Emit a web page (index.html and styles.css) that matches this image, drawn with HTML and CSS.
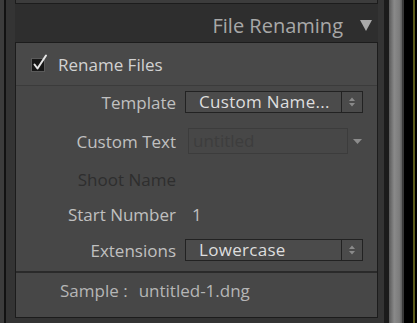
FILE: index.html
```html
<!DOCTYPE html>
<html lang="en">
<head>
  <meta charset="UTF-8" />
  <title>File Renaming</title>
  <link rel="stylesheet" href="styles.css">
</head>
<body>
  <div class="frame">
    <div class="edge-left"></div>
    <div class="edge-line"></div>

    <div class="side">
      <div class="prev-panel"></div>

      <div class="panel-head">
        <span class="head-title">File Renaming</span>
        <svg class="head-arrow" width="12" height="11" viewBox="0 0 12 11">
          <path d="M0 0 H12 L6 11 Z" fill="#a9a9a9"/>
        </svg>
      </div>

      <div class="panel">
        <div class="rename-row">
          <svg class="check" width="22" height="20" viewBox="0 0 22 20">
            <rect x="1.5" y="5.5" width="13" height="13" fill="#171717" stroke="#5a5a5a"/>
            <path d="M4.5 11.5 L7.5 15.5 L16 2.5" fill="none" stroke="#e6e6e6" stroke-width="2" stroke-linecap="round" stroke-linejoin="round"/>
          </svg>
          <span class="rename-label">Rename Files</span>
        </div>

        <div class="fields">
          <div class="field">
            <span class="label">Template</span>
            <div class="select">
              <span class="select-value">Custom Name...</span>
              <span class="stepper">
                <svg width="8" height="12" viewBox="0 0 8 12">
                  <path d="M1 5 L4 1.5 L7 5 Z M1 7 L4 10.5 L7 7 Z" fill="#8a8a8a"/>
                </svg>
              </span>
            </div>
          </div>

          <div class="field field-text">
            <span class="label">Custom Text</span>
            <div class="text-input">untitled</div>
            <svg class="drop" width="9" height="5" viewBox="0 0 9 5">
              <path d="M0 0 H9 L4.5 5 Z" fill="#8c8c8c"/>
            </svg>
          </div>

          <div class="field">
            <span class="label disabled">Shoot Name</span>
          </div>

          <div class="field">
            <span class="label">Start Number</span>
            <span class="value">1</span>
          </div>

          <div class="field field-last">
            <span class="label">Extensions</span>
            <div class="select">
              <span class="select-value">Lowercase</span>
              <span class="stepper">
                <svg width="8" height="12" viewBox="0 0 8 12">
                  <path d="M1 5 L4 1.5 L7 5 Z M1 7 L4 10.5 L7 7 Z" fill="#8a8a8a"/>
                </svg>
              </span>
            </div>
          </div>
        </div>

        <div class="sample-row">
          <span>Sample :</span>
          <span>untitled-1.dng</span>
        </div>
      </div>
    </div>

    <div class="gutter"></div>
    <div class="scrollbar"></div>
    <div class="scroll-edge"></div>
    <div class="blackout"></div>
    <div class="olive"></div>
    <div class="blackout-end"></div>
  </div>
</body>
</html>
```

FILE: styles.css
```css
body {
  margin: 0;
  background: #000;
  font-family: 'Open Sans', sans-serif;
}

.frame {
  display: flex;
  width: 417px;
  height: 323px;
  overflow: hidden;
}

.edge-left {
  width: 4px;
  background: #3c3c3c;
}

.edge-line {
  width: 2px;
  background: #121212;
}

.side {
  width: 378px;
  box-sizing: border-box;
  padding: 0 6px 0 9px;
  background: #343434;
  display: flex;
  flex-direction: column;
}

.prev-panel {
  height: 3px;
  background: #3c3c3c;
  border: 1px solid #1c1c1c;
  border-top: none;
}

.panel-head {
  height: 38px;
  box-sizing: border-box;
  padding: 4px 6px 0 0;
  display: flex;
  align-items: center;
  justify-content: flex-end;
  background: #2e2e2e;
}

.head-title {
  color: #a8a8a8;
  font-size: 20px;
  margin-right: 17px;
}

.head-arrow {
  margin-top: 1px;
}

.panel {
  flex: 1;
  margin-bottom: 5px;
  background: #474747;
  border: 1px solid #1c1c1c;
  display: flex;
  flex-direction: column;
}

.rename-row {
  height: 42px;
  display: flex;
  align-items: center;
  padding-left: 14px;
  border-bottom: 1px solid #3b3b3b;
  background: #494949;
}

.check {
  margin-top: -2px;
}

.rename-label {
  color: #d2d2d2;
  font-size: 17px;
  margin-left: 6px;
}

.fields {
  display: flex;
  flex-direction: column;
  gap: 5px;
  padding: 1px 0 6px;
}

.field {
  height: 30px;
  display: flex;
  align-items: center;
  font-size: 17px;
}

.field-text {
  margin: 4px 0 3px;
}

.field-last {
  margin-top: 1px;
}

.label {
  width: 160px;
  text-align: right;
  color: #c0c0c0;
  margin-right: 9px;
}

.label.disabled {
  color: #2e2e2e;
}

.value {
  color: #c0c0c0;
  margin-left: 7px;
}

.select {
  width: 178px;
  height: 22px;
  box-sizing: border-box;
  border: 1px solid #222;
  background: #4b4b4b;
  display: flex;
}

.select-value {
  flex: 1;
  color: #dedede;
  padding-left: 13px;
  line-height: 20px;
  letter-spacing: 0.3px;
}

.stepper {
  width: 20px;
  border-left: 1px solid #222;
  display: flex;
  align-items: center;
  justify-content: center;
}

.text-input {
  width: 160px;
  height: 26px;
  box-sizing: border-box;
  margin-left: 3px;
  border: 1px solid #3c3c3c;
  color: #3d3d3d;
  padding-left: 4px;
  line-height: 24px;
}

.drop {
  margin-left: 5px;
}

.sample-row {
  flex: 1;
  display: flex;
  align-items: flex-start;
  gap: 11px;
  padding: 6px 0 0 44px;
  border-top: 2px solid #2a2a2a;
  color: #b6b6b6;
  font-size: 17px;
}

.gutter {
  width: 5px;
  background: #1b1b1b;
}

.scrollbar {
  width: 13px;
  background: linear-gradient(to right, #5a5a5a, #8a8a8a 40%, #7c7c7c 80%, #5e5e5e);
}

.scroll-edge {
  width: 2px;
  background: #3a3a3a;
}

.blackout {
  width: 9px;
  background: #000;
}

.olive {
  width: 2px;
  background: #5c5c1c;
}

.blackout-end {
  width: 2px;
  background: #000;
}
```
